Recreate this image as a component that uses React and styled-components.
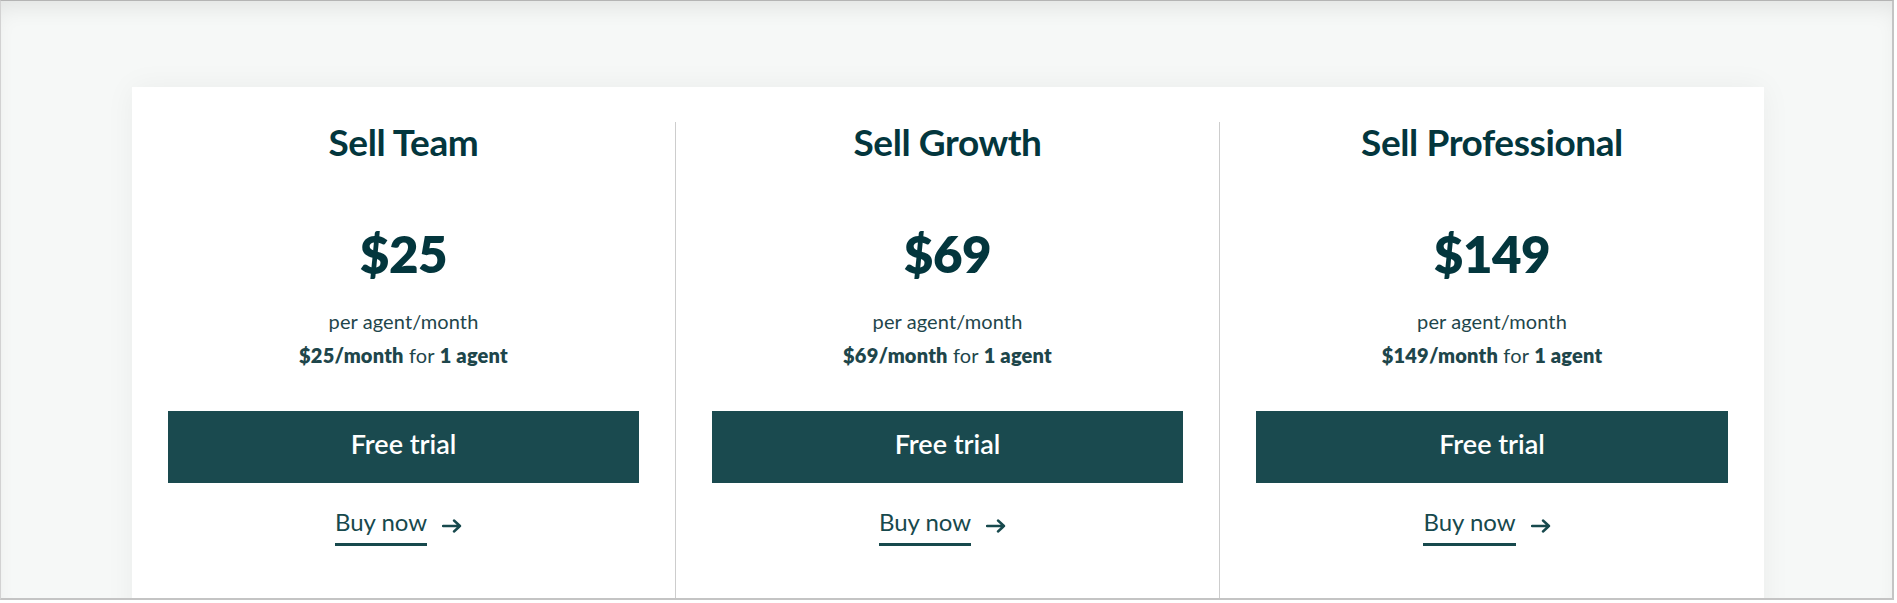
import React from "react";
import styled, { createGlobalStyle } from "styled-components";

const GlobalStyle = createGlobalStyle`
  body {
    margin: 0;
    background: #ffffff;
    font-family: Lato, "Noto Sans", sans-serif;
  }
`;

const Frame = styled.div`
  box-sizing: border-box;
  width: 1894px;
  height: 600px;
  overflow: hidden;
  background: #f6f8f7;
  border-top: 1px solid #b4b4b4;
  border-left: 1px solid #d2d2d2;
  border-right: 2px solid #c4c4c4;
  border-bottom: 2px solid #c4c4c4;
  box-shadow: inset 0 14px 22px -8px rgba(0, 0, 0, 0.09);
  padding: 86px 0 0 131px;
`;

const Card = styled.div`
  width: 1632px;
  height: 560px;
  background: #ffffff;
  box-shadow: 0 0 28px rgba(0, 0, 0, 0.05);
  display: grid;
  grid-template-columns: repeat(3, 1fr);
  padding-top: 35px;
  box-sizing: border-box;
`;

const Plan = styled.div`
  display: flex;
  flex-direction: column;
  align-items: center;
  padding: 0 36px;
  border-right: ${({ $last }) => ($last ? "none" : "1px solid #cdcdcd")};
  color: #03363d;
`;

const Title = styled.h2`
  margin: 0;
  font-size: 37px;
  line-height: 40px;
  font-weight: 700;
  letter-spacing: -0.4px;
`;

const Price = styled.div`
  margin-top: 61px;
  font-size: 51px;
  line-height: 1.2;
  font-weight: 800;
  letter-spacing: -0.5px;
`;

const Per = styled.div`
  margin-top: 25px;
  font-size: 20px;
  line-height: 1.2;
  letter-spacing: 0.1px;
  color: #1e464b;
`;

const Detail = styled.div`
  margin-top: 10px;
  font-size: 20px;
  line-height: 1.2;
  letter-spacing: 0.2px;
  color: #1e464b;

  b {
    font-weight: 800;
  }
`;

const TrialButton = styled.button`
  margin-top: 44px;
  width: 100%;
  height: 72px;
  padding: 0 0 8px;
  border: none;
  background: #1a4a4f;
  color: #ffffff;
  font-family: Lato, "Noto Sans", sans-serif;
  font-size: 27px;
  font-weight: 600;
  cursor: pointer;
`;

const BuyRow = styled.div`
  margin-top: 25px;
  display: flex;
  align-items: flex-start;
  gap: 15px;
  color: #17494d;
`;

const BuyLink = styled.a`
  font-size: 24px;
  line-height: 1.2;
  padding-bottom: 6px;
  border-bottom: 3px solid #17494d;
  color: inherit;
  text-decoration: none;
`;

const Arrow = () => (
  <svg
    width="20"
    height="14"
    viewBox="0 0 20 14"
    style={{ marginTop: 11, marginRight: 10 }}
  >
    <path
      d="M1 7h17M12 1.5L18 7l-6 5.5"
      fill="none"
      stroke="#17494d"
      strokeWidth="2.4"
      strokeLinecap="round"
      strokeLinejoin="round"
    />
  </svg>
);

const plans = [
  { name: "Sell Team", price: 25 },
  { name: "Sell Growth", price: 69 },
  { name: "Sell Professional", price: 149 },
];

export default function App() {
  return (
    <>
      <GlobalStyle />
      <Frame>
        <Card>
          {plans.map((p, i) => (
            <Plan key={p.name} $last={i === plans.length - 1}>
              <Title>{p.name}</Title>
              <Price>${p.price}</Price>
              <Per>per agent/month</Per>
              <Detail>
                <b>${p.price}/month</b> for <b>1 agent</b>
              </Detail>
              <TrialButton>Free trial</TrialButton>
              <BuyRow>
                <BuyLink href="#">Buy now</BuyLink>
                <Arrow />
              </BuyRow>
            </Plan>
          ))}
        </Card>
      </Frame>
    </>
  );
}
